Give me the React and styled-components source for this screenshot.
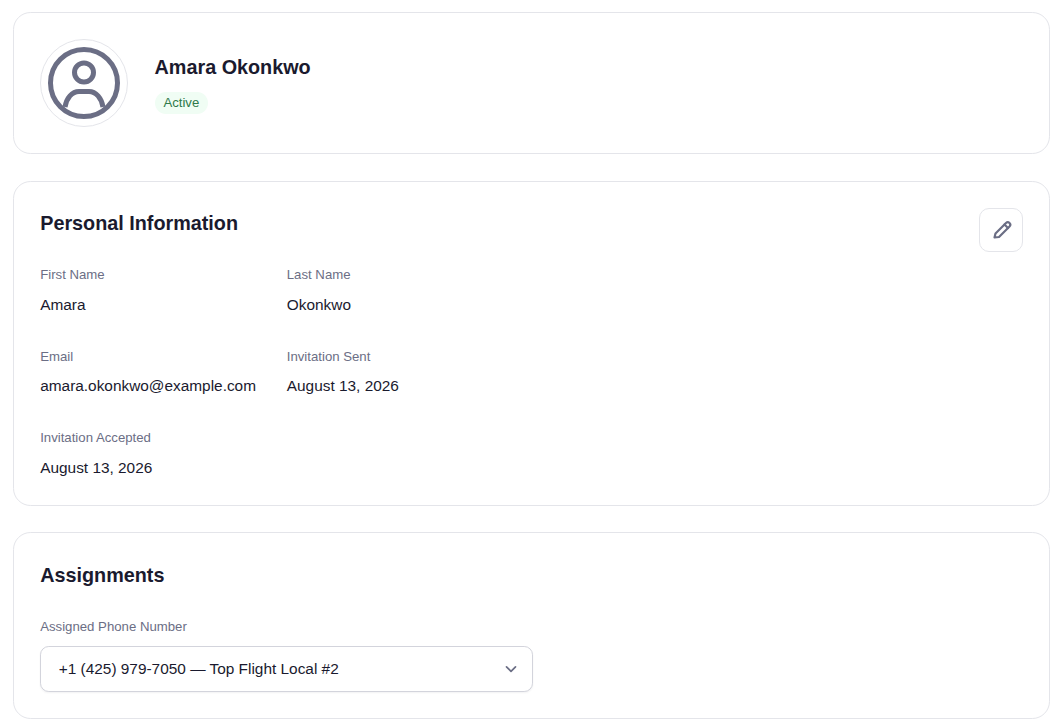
import React from 'react';
import styled, { createGlobalStyle } from 'styled-components';

const GlobalStyle = createGlobalStyle`
  html, body {
    margin: 0;
    padding: 0;
    background: #fff;
    font-family: "Liberation Sans", Arial, sans-serif;
  }
`;

const Page = styled.div`
  display: flex;
  flex-direction: column;
  gap: 26.4px;
  padding: 11.6px 12px 9px 12.8px;
  box-sizing: border-box;
`;

const Card = styled.section`
  position: relative;
  border: 1px solid #e4e5ea;
  border-radius: 17.6px;
  background: #fff;
  padding: 26.4px;
`;

const ProfileRow = styled.div`
  display: flex;
  align-items: center;
  gap: 26.4px;
`;

const Avatar = styled.div`
  width: 88px;
  height: 88px;
  box-sizing: border-box;
  border: 1px solid #e4e5ea;
  border-radius: 50%;
  display: flex;
  align-items: center;
  justify-content: center;
  color: #6b6e85;
`;

const ProfileText = styled.div`
  display: flex;
  flex-direction: column;
  align-items: flex-start;
  gap: 12px;
  padding-top: 3px;
`;

const Name = styled.h1`
  margin: 0;
  font-size: 19.8px;
  line-height: 26px;
  font-weight: 700;
  color: #1a1a2e;
`;

const Badge = styled.span`
  background: #f0fdf4;
  color: #2f7a4a;
  font-size: 13.2px;
  line-height: 22px;
  padding: 0 8.8px;
  border-radius: 11px;
`;

const SectionTitle = styled.h2`
  margin: 0 0 27.8px;
  font-size: 19.8px;
  line-height: 30px;
  font-weight: 700;
  color: #1a1a2e;
`;

const EditButton = styled.button`
  position: absolute;
  top: 26.4px;
  right: 26.4px;
  width: 44px;
  height: 44px;
  padding: 0;
  display: flex;
  align-items: center;
  justify-content: center;
  background: #fff;
  border: 1px solid #e4e5ea;
  border-radius: 10px;
  color: #6b6e85;
`;

const FieldGrid = styled.div`
  display: grid;
  grid-template-columns: max-content max-content;
  column-gap: 30.8px;
  row-gap: 32.1px;
`;

const Field = styled.div`
  display: flex;
  flex-direction: column;
  gap: 9.8px;
`;

const Label = styled.div`
  font-size: 13.2px;
  line-height: 18px;
  color: #6b6e85;
`;

const Value = styled.div`
  font-size: 15.4px;
  line-height: 21.7px;
  color: #1a1a2e;
`;

const AssignField = styled.div`
  display: flex;
  flex-direction: column;
  gap: 10px;
`;

const SelectBox = styled.div`
  width: 492.8px;
  height: 46.2px;
  box-sizing: border-box;
  display: flex;
  align-items: center;
  justify-content: space-between;
  padding: 0 13px 0 17.6px;
  border: 1px solid #d3d4dc;
  border-radius: 8.8px;
  box-shadow: 0 1px 2px rgba(26, 26, 46, 0.06);
  font-size: 15.4px;
  color: #1a1a2e;
  background: #fff;
`;

const UserCircle = () => (
  <svg width="74" height="74" viewBox="0 0 74 74" fill="none" stroke="currentColor" strokeWidth="5">
    <circle cx="37" cy="37" r="33.5" />
    <circle cx="37" cy="26.5" r="9.5" />
    <path d="M18 61c1.5-9 7-15.5 14-15.5h10c7 0 12.5 6.5 14 15.5" />
  </svg>
);

const Pencil = () => (
  <svg width="22" height="22" viewBox="0 0 22 22" fill="none" stroke="currentColor" strokeWidth="2.2" strokeLinecap="round" strokeLinejoin="round">
    <path d="M4.5 18.5l1-4L16 4a2.47 2.47 0 0 1 3.5 3.5L9 18z" />
    <path d="M14.5 5.5l3.5 3.5" />
  </svg>
);

const Chevron = () => (
  <svg width="16" height="16" viewBox="0 0 16 16" fill="none" stroke="#6b6e85" strokeWidth="1.7" strokeLinecap="round" strokeLinejoin="round">
    <path d="m3.5 5.8 4.5 4.5 4.5-4.5" />
  </svg>
);

const fields = [
  ['First Name', 'Amara'],
  ['Last Name', 'Okonkwo'],
  ['Email', 'amara.okonkwo@example.com'],
  ['Invitation Sent', 'August 13, 2026'],
  ['Invitation Accepted', 'August 13, 2026'],
];

export default function App() {
  return (
    <>
      <GlobalStyle />
      <Page>
        <Card>
          <ProfileRow>
            <Avatar>
              <UserCircle />
            </Avatar>
            <ProfileText>
              <Name>Amara Okonkwo</Name>
              <Badge>Active</Badge>
            </ProfileText>
          </ProfileRow>
        </Card>

        <Card>
          <SectionTitle>Personal Information</SectionTitle>
          <EditButton aria-label="Edit">
            <Pencil />
          </EditButton>
          <FieldGrid>
            {fields.map(([label, value]) => (
              <Field key={label}>
                <Label>{label}</Label>
                <Value>{value}</Value>
              </Field>
            ))}
          </FieldGrid>
        </Card>

        <Card>
          <SectionTitle>Assignments</SectionTitle>
          <AssignField>
            <Label>Assigned Phone Number</Label>
            <SelectBox>
              <span>+1 (425) 979-7050 — Top Flight Local #2</span>
              <Chevron />
            </SelectBox>
          </AssignField>
        </Card>
      </Page>
    </>
  );
}
